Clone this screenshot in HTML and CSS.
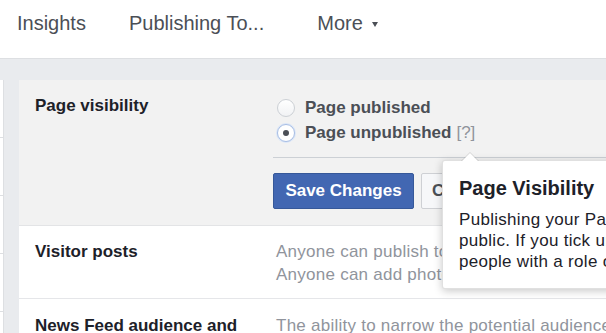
FILE: index.html
```
<!doctype html>
<html>
<head>
<meta charset="utf-8" />
<title>Page settings</title>
<link rel="stylesheet" href="styles.css">
</head>
<body>
<div class="topnav">
	<a class="tab" href="javascript:;">Insights</a>
	<a class="tab" href="javascript:;">Publishing To...</a>
	<a class="tab more" href="javascript:;">More<i class="caret"></i></a>
</div>

<div class="page">
	<div class="side">
		<div></div><div></div><div></div><div></div><div></div>
	</div>

	<div class="panel">
		<div class="row editing">
			<div class="label">Page visibility</div>
			<div class="content">
				<label class="radio"><span class="dot"></span>Page published</label>
				<label class="radio"><span class="dot checked"></span>Page unpublished <span class="help">[?]</span></label>
				<div class="sep"></div>
				<div class="buttons">
					<button class="btn primary">Save Changes</button>
					<button class="btn">Cancel</button>
				</div>
			</div>
			<!-- tooltip for [?] -->
			<div class="tip">
				<h4>Page Visibility</h4>
				<p>Publishing your Page makes it visible to the<br>public. If you tick unpublished, the Page is only visible to<br>people with a role on the Page.</p>
			</div>
		</div>
		<div class="row">
			<div class="label">Visitor posts</div>
			<div class="content muted">
				Anyone can publish to the Page<br>
				Anyone can add photos and videos to the Page
			</div>
		</div>
		<div class="row">
			<div class="label">News Feed audience and visibility for posts</div>
			<div class="content muted">
				The ability to narrow the potential audience for News Feed and limit visibility on your posts is turned off
			</div>
		</div>
	</div>
</div>
</body>
</html>
```

FILE: styles.css
```
*{margin: 0;padding: 0;box-sizing: border-box;}
body{background: #e9ebee;font-family: "Liberation Sans", Arial, sans-serif;overflow: hidden;width: 606px;height: 333px;}

.topnav{height: 59px;background: #fff;border-bottom: 1px solid #dddfe2;padding: 11px 0 0 17px;display: flex;align-items: flex-start;}
.tab{font-size: 20px;line-height: 24px;height: 24px;color: #4b4f56;text-decoration: none;white-space: nowrap;margin-right: 43px;}
.tab.more{margin-left: 10px;display: flex;align-items: center;}
.caret{display: inline-block;margin-left: 9px;margin-top: 2px;border-left: 3px solid transparent;border-right: 3px solid transparent;border-top: 5px solid #4b4f56;}

.page{display: flex;padding-top: 21px;}
.side{width: 4px;background: #fff;border-right: 1px solid #dddfe2;flex: none;}
.side div{height: 58px;border-bottom: 1px solid #dddfe2;}

.panel{position: relative;margin-left: 15px;width: 720px;flex: none;background: #fff;}
.row{display: grid;grid-template-columns: 238px 1fr;padding: 14px 0 12px 16px;border-top: 1px solid #e5e6e9;}
.row:last-child{padding-top: 15px;}
.row.editing{background: #f2f2f2;border-top: none;padding: 15px 0 16px 16px;border-bottom: 1px solid #e3e4e6;}
.row.editing + .row{border-top: none;}

.label{font-size: 17px;line-height: 23px;font-weight: bold;color: #1d2129;padding-right: 10px;}
.editing .label{line-height: 21px;}
.content{font-size: 17px;line-height: 23px;}
.muted{color: #90949c;padding-left: 3px;white-space: nowrap;letter-spacing: 0.25px;}

.radio{display: flex;align-items: center;height: 25px;font-weight: bold;color: #4b4f56;white-space: nowrap;}
.dot{width: 18px;height: 18px;border-radius: 50%;border: 1px solid #ccd0d5;background: linear-gradient(#fff, #f1f2f4);margin: 0 10px 0 4px;position: relative;flex: none;}
.dot.checked{border: 1px solid #a7bde3;box-shadow: 0 0 0 1px #dbe6f7;background: #fff;}
.dot.checked:after{content: "";position: absolute;left: 5px;top: 5px;width: 6px;height: 6px;border-radius: 50%;background: #4b4f56;}
.help{font-weight: normal;color: #90949c;margin-left: 5px;}

.sep{height: 1px;background: #ccd0d5;margin: 12px 0 15px;}
.buttons{display: flex;gap: 7px;}
.btn{font-family: inherit;font-size: 17px;font-weight: bold;height: 36px;padding: 0 10px;border: 1px solid #ced0d4;border-radius: 2px;background: #f6f7f9;color: #4b4f56;}
.btn.primary{width: 141px;background: #4267b2;border-color: #365899;color: #fff;}

.tip{position: absolute;left: 423px;top: 80px;width: 330px;background: #fff;border: 1px solid rgba(0,0,0,0.12);border-radius: 3px;box-shadow: 0 2px 8px rgba(0,0,0,0.22);padding: 15px 16px 16px;z-index: 5;}
.tip:before{content: "";position: absolute;left: 18px;top: -9px;border-left: 9px solid transparent;border-right: 9px solid transparent;border-bottom: 9px solid rgba(0,0,0,0.12);}
.tip:after{content: "";position: absolute;left: 19px;top: -8px;border-left: 8px solid transparent;border-right: 8px solid transparent;border-bottom: 8px solid #fff;}
.tip h4{font-size: 20px;line-height: 24px;color: #1d2129;margin-bottom: 9px;}
.tip p{font-size: 17px;line-height: 21px;color: #1d2129;white-space: nowrap;letter-spacing: 0.3px;}
```
